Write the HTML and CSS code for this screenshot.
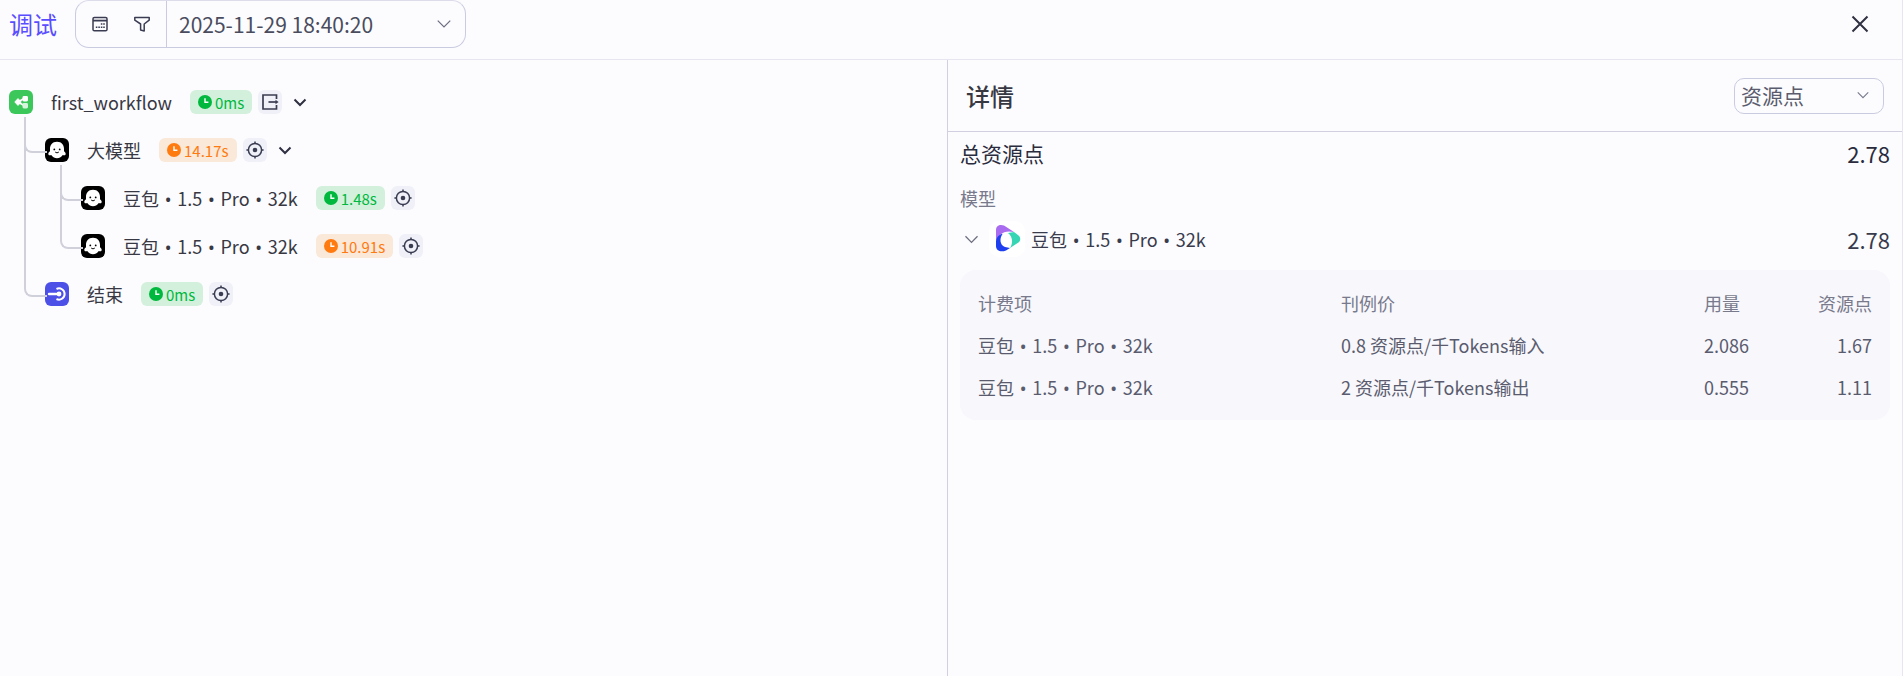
FILE: index.html
```html
<!DOCTYPE html>
<html lang="zh-CN">

<head>
    <meta charset="UTF-8">
    <title>调试</title>
    <link rel="stylesheet" href="styles.css">
</head>

<body>
    <svg class="defs" width="0" height="0">
        <symbol id="clock" viewBox="0 0 14 14">
            <circle cx="7" cy="7" r="7" fill="currentColor" />
            <path d="M7 3.2V7.3H10.4" fill="none" stroke="#fff" stroke-width="1.4" />
        </symbol>
        <symbol id="target" viewBox="0 0 24 24">
            <circle cx="12" cy="12" r="6.6" fill="none" stroke="currentColor" stroke-width="1.5" />
            <circle cx="12" cy="12" r="2.3" fill="currentColor" />
            <path d="M12 3.4V6M12 18V20.6M3.4 12H6M18 12H20.6" fill="none" stroke="currentColor" stroke-width="1.5" />
        </symbol>
        <symbol id="chevron" viewBox="0 0 24 24">
            <path d="M6.5 9.5L12 15L17.5 9.5" fill="none" stroke="currentColor" stroke-width="2" />
        </symbol>
        <symbol id="face" viewBox="0 0 24 24">
            <rect width="24" height="24" rx="6" fill="#000" />
            <path d="M12 3.8C16.8 3.8 19 7.2 19 11V13.2C20.2 14 21 15.2 20.6 16.4C20.2 17.4 18.8 17.4 17.8 17C16 19.2 14.2 20.2 12 20.2C9.8 20.2 8 19.2 6.2 17C5.2 17.4 3.8 17.4 3.4 16.4C3 15.2 3.8 14 5 13.2V11C5 7.2 7.2 3.8 12 3.8Z" fill="#fff" />
            <circle cx="9.3" cy="11.4" r="0.9" fill="#000" />
            <circle cx="14.7" cy="11.4" r="0.9" fill="#000" />
            <path d="M10.2 14C11.2 15 12.8 15 13.8 14" fill="none" stroke="#000" stroke-width="1" />
        </symbol>
    </svg>

    <header class="topbar">
        <span class="title">调试</span>
        <div class="picker">
            <div class="picker-tools">
                <svg class="tool" viewBox="0 0 18 18">
                    <rect x="2" y="2.4" width="14" height="13.4" rx="1.4" fill="none" stroke="currentColor" stroke-width="1.5" />
                    <path d="M2 5.6H16" fill="none" stroke="currentColor" stroke-width="1.8" />
                    <path d="M9.8 8.2h1.6v1.6H9.8zM12.2 8.2h1.6v1.6h-1.6zM4.8 11.4h1.6V13H4.8zM7.3 11.4h1.6V13H7.3zM9.8 11.4h1.6V13H9.8zM12.2 11.4h1.6V13h-1.6z" fill="currentColor" />
                </svg>
                <svg class="tool" viewBox="0 0 18 18">
                    <path d="M1.8 2.6H16.2V5.2L11.2 9V16L7.6 15V9L1.8 5.2Z" fill="none" stroke="currentColor" stroke-width="1.5" stroke-linejoin="round" />
                </svg>
            </div>
            <div class="picker-value">
                <span>2025-11-29 18:40:20</span>
                <svg class="picker-arrow" viewBox="0 0 24 24">
                    <path d="M4.5 8L12 15.5L19.5 8" fill="none" stroke="currentColor" stroke-width="1.5" />
                </svg>
            </div>
        </div>
        <svg class="close" viewBox="0 0 18 18">
            <path d="M1.5 1.5L16.5 16.5M16.5 1.5L1.5 16.5" fill="none" stroke="currentColor" stroke-width="2" />
        </svg>
    </header>

    <main class="layout">
        <section class="tree">
            <div class="node">
                <div class="row">
                    <svg class="node-icon" viewBox="0 0 24 24">
                        <rect width="24" height="24" rx="6" fill="#3cc75a" />
                        <path d="M9 12L15 8.5M9 12L15 15.5" stroke="#fff" stroke-width="1.6" fill="none" />
                        <path d="M9 8.6L12.2 12L9 15.4L5.8 12Z" fill="#fff" stroke="#fff" stroke-linejoin="round" />
                        <rect x="13.5" y="6" width="5.5" height="5.5" rx="1.4" fill="#fff" />
                        <rect x="13.5" y="13" width="5.5" height="5.5" rx="1.4" fill="#d5f5dc" />
                    </svg>
                    <span class="label">first_workflow</span>
                    <span class="tag green"><svg class="clock"><use href="#clock" /></svg>0ms</span>
                    <span class="icon-btn">
                        <svg viewBox="0 0 24 24">
                            <path d="M18.5 9V5H5V19H18.5V15" fill="none" stroke="currentColor" stroke-width="1.7" />
                            <path d="M10.5 12H19" fill="none" stroke="currentColor" stroke-width="1.7" />
                            <path d="M17.5 9.8L20.6 12L17.5 14.2Z" fill="currentColor" />
                        </svg>
                    </span>
                    <svg class="chevron"><use href="#chevron" /></svg>
                </div>
                <div class="children">
                    <div class="node">
                        <div class="row elbow">
                            <svg class="node-icon"><use href="#face" /></svg>
                            <span class="label">大模型</span>
                            <span class="tag orange"><svg class="clock"><use href="#clock" /></svg>14.17s</span>
                            <span class="icon-btn"><svg><use href="#target" /></svg></span>
                            <svg class="chevron"><use href="#chevron" /></svg>
                        </div>
                        <div class="children">
                            <div class="row elbow">
                                <svg class="node-icon"><use href="#face" /></svg>
                                <span class="label">豆包 <span class="dot">•</span> 1.5 <span class="dot">•</span> Pro <span class="dot">•</span> 32k</span>
                                <span class="tag green"><svg class="clock"><use href="#clock" /></svg>1.48s</span>
                                <span class="icon-btn"><svg><use href="#target" /></svg></span>
                            </div>
                            <div class="row elbow elbow-2">
                                <svg class="node-icon"><use href="#face" /></svg>
                                <span class="label">豆包 <span class="dot">•</span> 1.5 <span class="dot">•</span> Pro <span class="dot">•</span> 32k</span>
                                <span class="tag orange"><svg class="clock"><use href="#clock" /></svg>10.91s</span>
                                <span class="icon-btn"><svg><use href="#target" /></svg></span>
                            </div>
                        </div>
                    </div>
                    <div class="row elbow elbow-4">
                        <svg class="node-icon" viewBox="0 0 24 24">
                            <rect width="24" height="24" rx="6" fill="#4d50e6" />
                            <path d="M11.5 7A5.6 5.6 0 1 1 11.5 17" fill="none" stroke="#fff" stroke-width="2" />
                            <path d="M4 12H13" fill="none" stroke="#fff" stroke-width="2.4" stroke-linecap="round" />
                            <circle cx="14" cy="12" r="2.4" fill="#fff" />
                        </svg>
                        <span class="label">结束</span>
                        <span class="tag green"><svg class="clock"><use href="#clock" /></svg>0ms</span>
                        <span class="icon-btn"><svg><use href="#target" /></svg></span>
                    </div>
                </div>
            </div>
        </section>

        <aside class="detail">
            <div class="detail-head">
                <h2>详情</h2>
                <div class="select">
                    <span>资源点</span>
                    <svg viewBox="0 0 24 24">
                        <path d="M5 8.5L12 15.5L19 8.5" fill="none" stroke="currentColor" stroke-width="1.5" />
                    </svg>
                </div>
            </div>
            <div class="detail-body">
                <div class="total">
                    <span class="total-name">总资源点</span>
                    <span>2.78</span>
                </div>
                <div class="group-name">模型</div>
                <div class="model">
                    <svg class="model-arrow" viewBox="0 0 24 24">
                        <path d="M3.5 7.5L12 16L20.5 7.5" fill="none" stroke="currentColor" stroke-width="1.8" />
                    </svg>
                    <span class="logo">
                        <svg viewBox="0 0 36 36">
                            <path d="M7 22V9C7 4.5 11 3 15 4.5L25 11C20 10 15 10 11 14C8.5 16 7.5 19 7 22Z" fill="#a96cf0" />
                            <path d="M19 12L25 11L29.5 14.5C31.8 16 31.8 20 29.5 21.5L21 27C24 22 24 16 19 12Z" fill="#36d6b4" />
                            <path d="M7 20C8 15 11 13 13.5 13C10.5 17 10.5 24 16 26L21 27L17 29.5C12 31.5 7 30 7 25Z" fill="#1d3ff0" />
                        </svg>
                    </span>
                    <span class="model-name">豆包 <span class="dot">•</span> 1.5 <span class="dot">•</span> Pro <span class="dot">•</span> 32k</span>
                    <span class="model-value">2.78</span>
                </div>
                <div class="card">
                    <div class="cost-row cost-head">
                        <span>计费项</span>
                        <span>刊例价</span>
                        <span>用量</span>
                        <span class="num">资源点</span>
                    </div>
                    <div class="cost-row">
                        <span>豆包 <span class="dot">•</span> 1.5 <span class="dot">•</span> Pro <span class="dot">•</span> 32k</span>
                        <span>0.8 资源点/千Tokens输入</span>
                        <span>2.086</span>
                        <span class="num">1.67</span>
                    </div>
                    <div class="cost-row">
                        <span>豆包 <span class="dot">•</span> 1.5 <span class="dot">•</span> Pro <span class="dot">•</span> 32k</span>
                        <span>2 资源点/千Tokens输出</span>
                        <span>0.555</span>
                        <span class="num">1.11</span>
                    </div>
                </div>
            </div>
        </aside>
    </main>
</body>

</html>
```

FILE: styles.css
```css
* {
    box-sizing: border-box;
}

html,
body {
    height: 100%;
}

body {
    margin: 0;
    display: flex;
    flex-direction: column;
    overflow: hidden;
    font-family: "Noto Sans CJK SC", "Noto Sans", sans-serif;
    background: #fcfcff;
    color: #383843;
    border-right: 1px solid #e6e6f0;
}

.defs {
    position: absolute;
}

.dot {
    margin: 0 1.7px;
    font-family: "Noto Sans", sans-serif;
}

.topbar {
    display: flex;
    align-items: flex-start;
    flex: none;
    height: 60px;
    padding-left: 9px;
    border-bottom: 1px solid #e6e6f0;
}

.title {
    font-size: 24px;
    line-height: 48px;
    color: #5a4dff;
    width: 66px;
}

.picker {
    display: flex;
    width: 391px;
    height: 48px;
    border: 1px solid #c9cbe0;
    border-top-color: #dcdcea;
    border-radius: 14px;
}

.picker-tools {
    display: flex;
    align-items: center;
    gap: 24px;
    width: 91px;
    padding-left: 15px;
    color: #3a3d52;
    border-right: 1px solid #c9cbe0;
}

.tool {
    width: 18px;
    height: 18px;
}

.picker-value {
    display: flex;
    flex: 1;
    align-items: center;
    justify-content: space-between;
    padding: 0 11px 0 12px;
    font-size: 21px;
    color: #4a4c5e;
}

.picker-arrow {
    width: 20px;
    height: 20px;
    color: #6c6e80;
}

.close {
    width: 18px;
    height: 18px;
    margin: 15px 33px 0 auto;
    color: #2f3142;
}

.layout {
    display: flex;
    flex: 1;
    min-height: 0;
}

.tree {
    width: 947px;
    padding: 30px 0 0 9px;
}

.row {
    position: relative;
    display: flex;
    align-items: center;
    height: 24px;
    margin-bottom: 24px;
}

.children {
    padding-left: 36px;
}

/* connector from the parent icon down to this row */
.elbow::before {
    content: "";
    position: absolute;
    left: -21px;
    top: -21px;
    width: 21px;
    height: 34px;
    border-left: 2px solid #d0d0da;
    border-bottom: 2px solid #d0d0da;
    border-bottom-left-radius: 8px;
}

.elbow-2::before {
    top: -69px;
    height: 82px;
}

.elbow-4::before {
    top: -165px;
    height: 178px;
}

.node-icon {
    flex: none;
    width: 24px;
    height: 24px;
}

.label {
    margin: 0 18px;
    font-size: 18px;
    white-space: pre;
    color: #383843;
}

.tag {
    display: flex;
    align-items: center;
    height: 24px;
    padding: 0 8px;
    border-radius: 6px;
    font-size: 15px;
}

.green {
    background: #d2f0dc;
    color: #00b83e;
}

.orange {
    background: #fae8d9;
    color: #ff7a0f;
}

.clock {
    width: 14px;
    height: 14px;
    margin-right: 3px;
}

.icon-btn {
    display: block;
    width: 24px;
    height: 24px;
    margin-left: 6px;
    border-radius: 6px;
    background: #f0f0f8;
    color: #3a3d52;
}

.icon-btn svg {
    display: block;
    width: 24px;
    height: 24px;
}

.chevron {
    width: 24px;
    height: 24px;
    margin-left: 6px;
    color: #2f3142;
}

.detail {
    flex: 1;
    border-left: 1px solid #d0d0e0;
}

.detail-head {
    display: flex;
    align-items: center;
    justify-content: space-between;
    height: 72px;
    padding: 0 18px 0 18px;
    border-bottom: 1px solid #d0d0e0;
}

.detail-head h2 {
    margin: 0;
    font-size: 24px;
    font-weight: 500;
    color: #383843;
}

.select {
    display: flex;
    align-items: center;
    justify-content: space-between;
    width: 150px;
    height: 36px;
    padding: 0 11px 2px 6px;
    border: 1px solid #c9cbe0;
    border-radius: 10px;
    font-size: 21px;
    color: #5a5c6e;
}

.select svg {
    width: 18px;
    height: 18px;
    color: #777a8c;
}

.detail-body {
    padding: 0 12px;
}

.total {
    display: flex;
    justify-content: space-between;
    height: 48px;
    font-size: 22px;
    line-height: 42px;
    color: #2a2c3d;
}

.total-name {
    font-size: 21px;
}

.group-name {
    font-size: 18px;
    line-height: 26px;
    margin-top: 5px;
    color: #787a8c;
}

.model {
    display: flex;
    align-items: center;
    height: 36px;
    margin-top: 10px;
    font-size: 22px;
    color: #383b4c;
}

.model-arrow {
    width: 17px;
    height: 17px;
    margin: 0 9px 0 3px;
    color: #6c6e80;
}

.logo {
    display: block;
    width: 36px;
    height: 36px;
    border-radius: 10px;
    background: #fff;
}

.logo svg {
    display: block;
}

.model-name {
    margin-left: 6px;
    font-size: 18px;
    white-space: pre;
}

.model-value {
    margin-left: auto;
}

.card {
    margin-top: 13px;
    padding: 12px 18px 12px 18px;
    border-radius: 16px;
    background: #f7f7fc;
}

.cost-row {
    display: grid;
    grid-template-columns: 363px 363px 1fr 1fr;
    align-items: center;
    height: 42px;
    font-size: 18px;
    color: #5a5c6e;
    white-space: pre;
}

.cost-head {
    color: #787a8c;
}

.num {
    text-align: right;
}
```
